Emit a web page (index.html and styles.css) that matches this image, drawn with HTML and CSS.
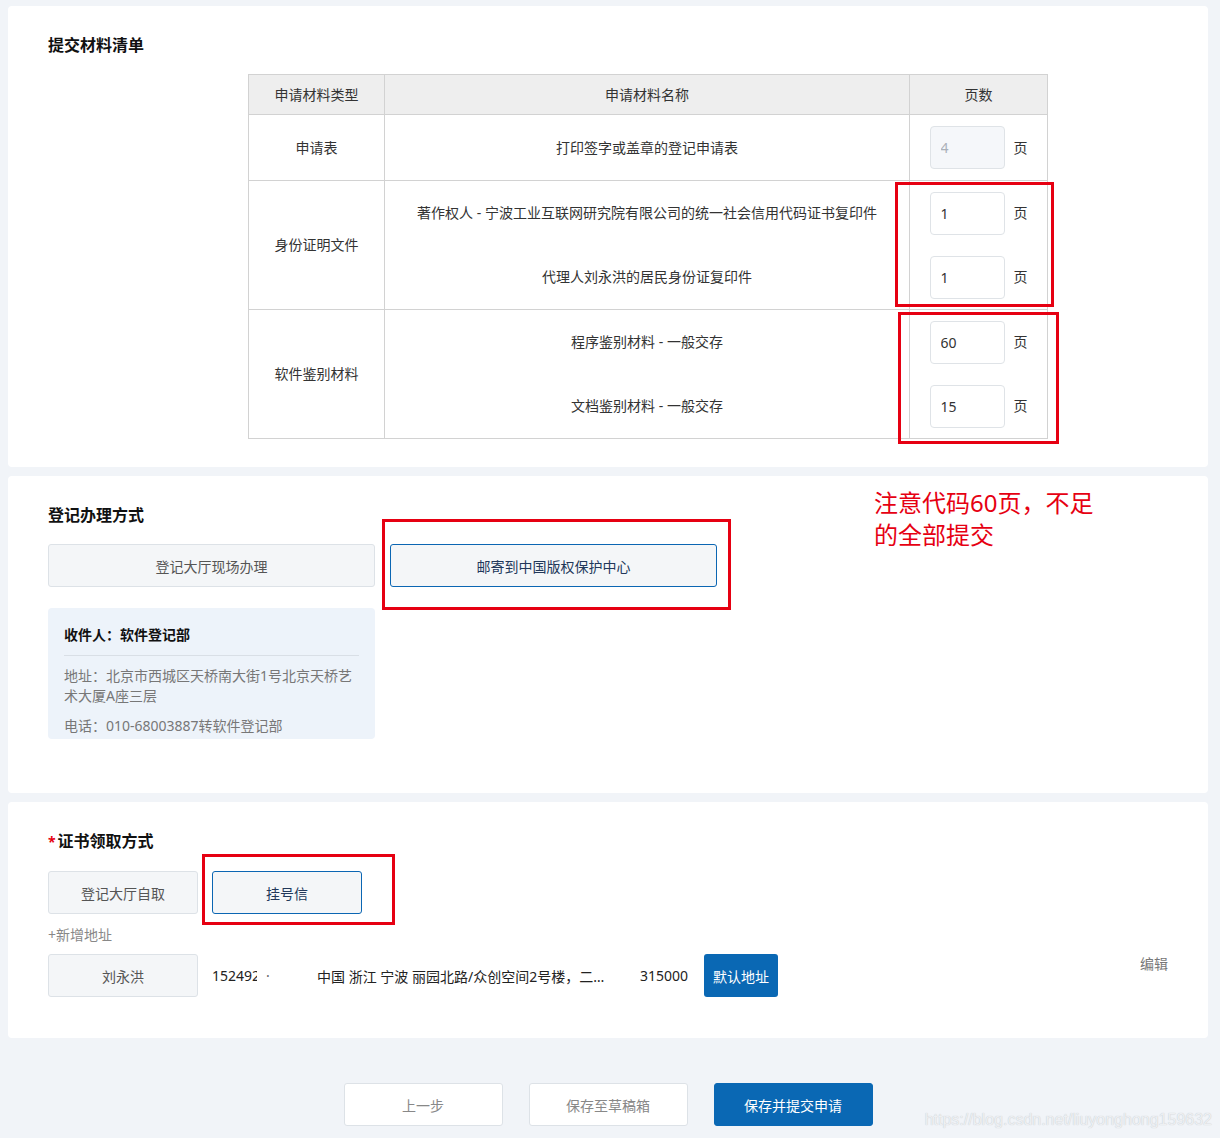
FILE: index.html
```html
<!DOCTYPE html>
<html lang="zh-CN">
<head>
<meta charset="utf-8">
<title>提交材料清单</title>
<link rel="stylesheet" href="styles.css">
</head>
<body>
<div class="page">
  <section class="card card-materials">
    <h2 class="card-title">提交材料清单</h2>
    <div class="mat-table">
      <div class="cell head">申请材料类型</div>
      <div class="cell head">申请材料名称</div>
      <div class="cell head">页数</div>

      <div class="cell">申请表</div>
      <div class="cell">打印签字或盖章的登记申请表</div>
      <div class="cell"><div class="page-item"><input class="page-input" value="4" disabled><span>页</span></div></div>

      <div class="cell">身份证明文件</div>
      <div class="cell split">
        <div class="sub">著作权人 - 宁波工业互联网研究院有限公司的统一社会信用代码证书复印件</div>
        <div class="sub">代理人刘永洪的居民身份证复印件</div>
      </div>
      <div class="cell split">
        <div class="sub"><div class="page-item"><input class="page-input" value="1"><span>页</span></div></div>
        <div class="sub"><div class="page-item"><input class="page-input" value="1"><span>页</span></div></div>
      </div>

      <div class="cell">软件鉴别材料</div>
      <div class="cell split">
        <div class="sub">程序鉴别材料 - 一般交存</div>
        <div class="sub">文档鉴别材料 - 一般交存</div>
      </div>
      <div class="cell split">
        <div class="sub"><div class="page-item"><input class="page-input" value="60"><span>页</span></div></div>
        <div class="sub"><div class="page-item"><input class="page-input" value="15"><span>页</span></div></div>
      </div>
    </div>
  </section>

  <section class="card card-method">
    <h2 class="card-title">登记办理方式</h2>
    <div class="options">
      <button class="opt wide">登记大厅现场办理</button>
      <button class="opt wide active">邮寄到中国版权保护中心</button>
    </div>
    <div class="recv">
      <div class="recv-name">收件人：软件登记部</div>
      <div class="recv-line">地址：北京市西城区天桥南大街1号北京天桥艺术大厦A座三层</div>
      <div class="recv-line">电话：010-68003887转软件登记部</div>
    </div>
  </section>

  <section class="card card-cert">
    <h2 class="card-title"><span class="req">*</span>证书领取方式</h2>
    <div class="options narrow">
      <button class="opt">登记大厅自取</button>
      <button class="opt active">挂号信</button>
    </div>
    <div class="add-addr">+新增地址</div>
    <div class="addr-row">
      <button class="opt">刘永洪</button>
      <span class="phone"><span class="phone-num">15249</span><span class="phone-cut">2</span><span class="phone-dot">·</span></span>
      <span class="addr-text">中国 浙江 宁波 丽园北路/众创空间2号楼，二层东侧办公室</span>
      <span class="zip">315000</span>
      <button class="default-btn">默认地址</button>
      <span class="edit">编辑</span>
    </div>
  </section>

  <div class="actions">
    <button class="btn">上一步</button>
    <button class="btn">保存至草稿箱</button>
    <button class="btn primary">保存并提交申请</button>
  </div>

  <div class="mark mark-1"></div>
  <div class="mark mark-2"></div>
  <div class="mark mark-3"></div>
  <div class="mark mark-4"></div>
  <div class="note">注意代码60页，不足的全部提交</div>
  <div class="watermark">https://blog.csdn.net/liuyonghong159632</div>
</div>
</body>
</html>
```

FILE: styles.css
```css
html, body {
  margin: 0;
  padding: 0;
}
body {
  background: #f1f4f8;
  font-family: "Noto Sans", "Noto Sans CJK SC", sans-serif;
  font-size: 14px;
  color: #333;
}
.page {
  position: relative;
  padding: 6px 12px 0 8px;
}
.card {
  background: #fff;
  border-radius: 4px;
  padding: 28px 40px;
}
.card + .card {
  margin-top: 9px;
}
.card-title {
  margin: 0;
  font-size: 16px;
  line-height: 22px;
  font-weight: 700;
  color: #111;
}
.card-materials {
  padding-bottom: 28px;
}
.mat-table {
  display: grid;
  grid-template-columns: 136px 525px 138px;
  grid-template-rows: 40px 66px 129px 129px;
  width: 800px;
  box-sizing: border-box;
  margin: 18px 0 0 200px;
  border-top: 1px solid #d2d2d2;
  border-left: 1px solid #d2d2d2;
}
.cell {
  box-sizing: border-box;
  display: flex;
  align-items: center;
  justify-content: center;
  text-align: center;
  border-right: 1px solid #d2d2d2;
  border-bottom: 1px solid #d2d2d2;
  line-height: 20px;
  color: #333;
}
.head {
  background: #eeeeee;
}
.split {
  flex-direction: column;
  align-items: stretch;
}
.sub {
  flex: 1;
  display: flex;
  align-items: center;
  justify-content: center;
}
.page-item {
  display: flex;
  align-items: center;
  gap: 9px;
}
.page-input {
  width: 75px;
  height: 43px;
  box-sizing: border-box;
  border: 1px solid #dfe3e7;
  border-radius: 4px;
  padding: 0 10px;
  font-family: "Noto Sans", "Noto Sans CJK SC", sans-serif;
  font-size: 14px;
  color: #333;
  background: #fff;
  outline: none;
}
.page-input:disabled {
  background: #f5f7fa;
  color: #aab0b8;
}

.card-method {
  padding-bottom: 54px;
}
.options {
  display: flex;
  gap: 15px;
  margin-top: 18px;
}
.options.narrow {
  gap: 14px;
}
.opt {
  width: 150px;
  height: 43px;
  box-sizing: border-box;
  border: 1px solid #dde2e7;
  border-radius: 3px;
  background: #f4f6f8;
  color: #555;
  font-family: inherit;
  font-size: 14px;
  padding: 0;
  display: flex;
  align-items: center;
  justify-content: center;
}
.opt.wide {
  width: 327px;
}
.opt.active {
  border-color: #0b66b3;
  color: #22385a;
}
.recv {
  width: 327px;
  height: 131px;
  box-sizing: border-box;
  margin-top: 21px;
  padding: 17px 16px 0;
  background: #edf3fa;
  border-radius: 4px;
  overflow: hidden;
}
.recv-name {
  font-weight: 700;
  color: #111;
  line-height: 20px;
  padding-bottom: 10px;
  border-bottom: 1px solid #d9dfe6;
}
.recv-line {
  color: #777;
  line-height: 20px;
  margin-top: 10px;
}

.card-cert {
  padding-bottom: 41px;
}
.req {
  color: #e60012;
  font-size: 14px;
  margin-right: 2px;
}
.add-addr {
  margin-top: 11px;
  line-height: 20px;
  color: #888;
}
.addr-row {
  display: flex;
  align-items: center;
  margin-top: 9px;
}
.phone {
  width: 105px;
  margin-left: 14px;
  white-space: nowrap;
  color: #222;
  display: flex;
  align-items: center;
}
.phone-cut {
  display: inline-block;
  width: 5px;
  overflow: hidden;
}
.phone-dot {
  margin-left: 9px;
  color: #666;
}
.addr-text {
  width: 300px;
  margin-right: 23px;
  white-space: nowrap;
  overflow: hidden;
  text-overflow: ellipsis;
  color: #222;
}
.zip {
  margin-right: 16px;
  color: #222;
}
.default-btn {
  width: 74px;
  height: 43px;
  border: none;
  border-radius: 3px;
  background: #0a68b4;
  color: #fff;
  font-family: inherit;
  font-size: 14px;
  padding: 0;
}
.edit {
  margin-left: auto;
  align-self: flex-start;
  line-height: 20px;
  color: #777;
}

.actions {
  display: flex;
  justify-content: center;
  gap: 26px;
  padding: 45px 0 13px;
}
.btn {
  width: 159px;
  height: 43px;
  box-sizing: border-box;
  border: 1px solid #dde2e7;
  border-radius: 3px;
  background: #fff;
  color: #888;
  font-family: inherit;
  font-size: 14px;
  padding: 0;
}
.btn.primary {
  background: #0a68b4;
  border-color: #0a68b4;
  color: #fff;
}

.mark {
  position: absolute;
  box-sizing: border-box;
  border: 3px solid #e60012;
}
.mark-1 { left: 895px; top: 182px; width: 159px; height: 125px; }
.mark-2 { left: 898px; top: 312px; width: 161px; height: 132px; }
.mark-3 { left: 382px; top: 519px; width: 349px; height: 91px; }
.mark-4 { left: 202px; top: 854px; width: 193px; height: 71px; }
.note {
  position: absolute;
  left: 874px;
  top: 487px;
  width: 232px;
  font-size: 24px;
  line-height: 32px;
  color: #e60012;
}
.watermark {
  position: absolute;
  right: 8px;
  bottom: 9px;
  font-family: "Liberation Sans", sans-serif;
  font-size: 16px;
  line-height: 20px;
  color: #eef0f3;
  text-shadow: 0 0 1px #b9bec4;
}
```
